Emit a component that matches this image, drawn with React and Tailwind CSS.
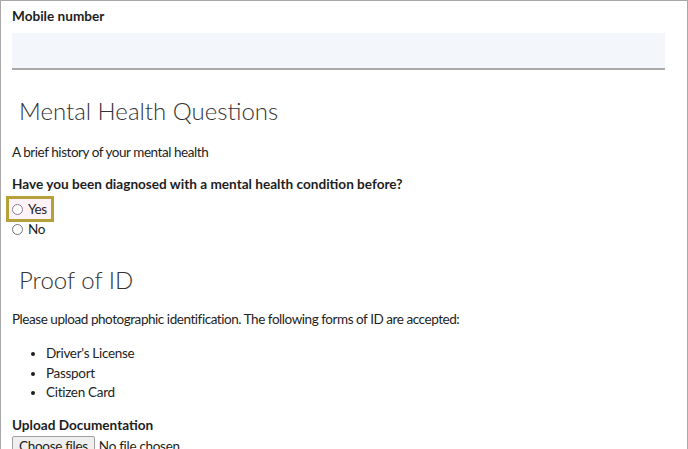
export default function App() {
  const reg = "text-[13.5px] tracking-[-0.45px] leading-[16px]";
  const bold = "text-[13.6px] font-bold leading-[16px]";
  return (
    <div
      className="w-[688px] h-[449px] overflow-hidden bg-white border-l border-t border-r border-[#a8a8a8] text-[#1e1e1e]"
      style={{ fontFamily: 'Lato, "Open Sans", sans-serif' }}
    >
      <div className="pl-[11px] pr-[22px]">
        <div className={"pt-[7px] " + bold}>Mobile number</div>
        <div className="mt-[9px] h-[37px] bg-[#f3f6fb] border-b-2 border-[#a9a9a9]"></div>
        <h2 className="mt-[25px] pl-[7px] text-[24px] font-light leading-[32px] text-[#333]">Mental Health Questions</h2>
        <p className={"mt-[17px] " + reg}>A brief history of your mental health</p>
        <div className={"mt-[16px] " + bold}>Have you been diagnosed with a mental health condition before?</div>
        <div className="mt-[4px] -ml-[6px] w-[48px] h-[26px] border-[3px] border-[#b5a03a] bg-[#fdf2f8] flex items-center pl-[3px] gap-[5px]">
          <span className="w-[11px] h-[11px] rounded-full border border-[#8a7a8a] bg-white"></span>
          <span className={reg}>Yes</span>
        </div>
        <div className="-mt-[1px] flex items-center gap-[5px] h-[16px]">
          <span className="w-[11px] h-[11px] rounded-full border border-[#777] bg-white"></span>
          <span className={reg}>No</span>
        </div>
        <h2 className="mt-[27px] pl-[7px] text-[24px] font-light leading-[32px] text-[#333]">Proof of ID</h2>
        <p className={"mt-[15px] " + reg}>Please upload photographic identification. The following forms of ID are accepted:</p>
        <ul className="mt-[17px] pl-[34px] list-disc text-[13.5px] tracking-[-0.3px] leading-[19.5px]">
          <li>Driver's License</li>
          <li>Passport</li>
          <li>Citizen Card</li>
        </ul>
        <div className={"mt-[14px] " + bold}>Upload Documentation</div>
        <div className="mt-[3px] flex items-center gap-[4px] text-[13.5px] tracking-[-0.3px]">
          <span className="px-[6px] h-[22px] flex items-center bg-[#efefef] border border-[#a0a0a0] rounded-[2px]">Choose files</span>
          <span>No file chosen</span>
        </div>
      </div>
    </div>
  );
}
